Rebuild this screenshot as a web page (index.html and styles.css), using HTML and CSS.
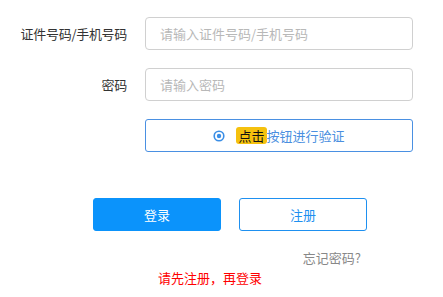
FILE: index.html
```html
<!DOCTYPE html>
<html lang="zh">
<head>
<meta charset="utf-8">
<link rel="stylesheet" href="styles.css">
</head>
<body>
<div class="form">
  <div class="row">
    <label class="label">证件号码/手机号码</label>
    <input class="input" type="text" placeholder="请输入证件号码/手机号码">
  </div>
  <div class="row">
    <label class="label">密码</label>
    <input class="input" type="password" placeholder="请输入密码">
  </div>
  <div class="row">
    <span class="label"></span>
    <div class="verify">
      <svg class="radio" width="12" height="12" viewBox="0 0 12 12"><circle cx="6" cy="6" r="4.8" fill="none" stroke="#3a8ee6" stroke-width="1.6"/><circle cx="6" cy="6" r="2.2" fill="#3a8ee6"/></svg>
      <span class="vtext"><span class="hl">点击</span>按钮进行验证</span>
    </div>
  </div>
  <div class="buttons">
    <button class="btn primary">登录</button>
    <button class="btn plain">注册</button>
  </div>
  <div class="forgot">忘记密码?</div>
  <div class="tip">请先注册，再登录</div>
</div>
</body>
</html>
```
FILE: styles.css
```css
html, body {
  margin: 0;
  padding: 0;
  background: #fff;
}
body {
  font-family: "Noto Sans CJK SC", "Microsoft YaHei", sans-serif;
  font-size: 13px;
  color: #333;
  width: 443px;
  height: 297px;
  overflow: hidden;
}
.form {
  padding-top: 17px;
}
.row {
  display: grid;
  grid-template-columns: 127px 268px;
  column-gap: 18px;
  align-items: center;
  margin-bottom: 18px;
}
.label {
  text-align: right;
  color: #333;
  font-size: 13px;
  letter-spacing: -0.3px;
}
.input {
  box-sizing: border-box;
  height: 33px;
  width: 268px;
  border: 1px solid #d0d0d0;
  border-radius: 4px;
  padding: 0 14px;
  font-family: inherit;
  font-size: 13px;
  color: #333;
  outline: none;
}
.input::placeholder {
  color: #b8b8b8;
}
.verify {
  box-sizing: border-box;
  height: 33px;
  width: 268px;
  border: 1px solid #4a90e2;
  border-radius: 3px;
  display: flex;
  align-items: center;
  justify-content: center;
  gap: 11px;
  color: #4a8fe0;
}
.radio {
  display: block;
}
.vtext {
  display: flex;
  align-items: center;
}
.hl {
  background: #f5c10e;
  color: #111;
  border-radius: 3px;
  padding: 0 2px;
  line-height: 17px;
}
.buttons {
  display: flex;
  gap: 18px;
  margin-top: 46px;
  padding-left: 93px;
}
.btn {
  box-sizing: border-box;
  width: 128px;
  height: 33px;
  border-radius: 3px;
  font-family: inherit;
  font-size: 13px;
  cursor: pointer;
}
.primary {
  background: #0b93fb;
  border: 1px solid #0b93fb;
  color: #fff;
}
.plain {
  background: #fff;
  border: 1px solid #1e90f0;
  color: #1e90f0;
}
.forgot {
  margin-top: 18px;
  width: 361px;
  text-align: right;
  color: #888;
  font-size: 13px;
  line-height: 18px;
}
.tip {
  margin-top: 2px;
  padding-left: 158px;
  color: #f00;
  font-size: 13px;
  line-height: 18px;
}
```
